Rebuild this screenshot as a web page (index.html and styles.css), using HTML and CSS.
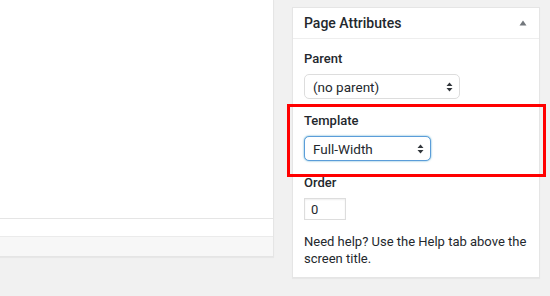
FILE: index.html
```html
<!DOCTYPE html>
<html lang="en">
<head>
  <meta charset="UTF-8" />
  <meta name="viewport" content="width=device-width, initial-scale=1" />
  <title>Page Attributes</title>
  <link rel="stylesheet" href="styles.css">
</head>
<body>

<div class="screen">
  <div class="editor">
    <div class="editor-area"></div>
    <div class="editor-row"></div>
    <div class="editor-status"></div>
  </div>

  <div class="postbox">
    <div class="postbox-head">
      <h2>Page Attributes</h2>
      <svg class="toggle" width="8" height="6" viewBox="0 0 8 6"><path d="M4 0.5 L7.5 5.5 L0.5 5.5 Z" fill="#72777c"/></svg>
    </div>
    <div class="inside">
      <div class="field">
        <label for="parent">Parent</label>
        <div class="select-wrap parent">
          <select id="parent"><option>(no parent)</option></select>
          <svg class="arrows" width="7" height="10" viewBox="0 0 7 10"><path d="M3.5 0.5 L6.5 4 L0.5 4 Z M3.5 9.5 L6.5 6 L0.5 6 Z" fill="#32373c"/></svg>
        </div>
      </div>

      <!-- highlighted -->
      <div class="field marked">
        <label for="template">Template</label>
        <div class="select-wrap template">
          <select id="template" class="focus"><option>Full-Width</option></select>
          <svg class="arrows" width="7" height="10" viewBox="0 0 7 10"><path d="M3.5 0.5 L6.5 4 L0.5 4 Z M3.5 9.5 L6.5 6 L0.5 6 Z" fill="#32373c"/></svg>
        </div>
      </div>

      <div class="field">
        <label for="order">Order</label>
        <input type="text" id="order" value="0">
      </div>

      <p class="help">Need help? Use the Help tab above the screen title.</p>
    </div>
  </div>
</div>

</body>
</html>
```

FILE: styles.css
```css
:root {
  --bg: #f1f1f1; --line: #e5e5e5; --text: #23282d;
  --input: #ddd; --focus: #5b9dd9; --mark: #ff0000;
}
body {
  margin: 0; background: var(--bg); color: var(--text);
  font-family: Roboto, "Noto Sans", sans-serif; font-size: 13px;
}
.screen { display: flex; align-items: flex-start; gap: 18px; height: 296px; overflow: hidden; }

.editor {
  width: 273px; border-right: 1px solid var(--line); border-bottom: 1px solid var(--line);
  background: #fff; box-shadow: 0 1px 1px rgba(0,0,0,.04);
}
.editor-area { height: 218px; }
.editor-row { height: 17px; border-top: 1px solid var(--line); }
.editor-status { height: 19px; border-top: 1px solid #ebebeb; background: #f7f7f7; }

.postbox {
  width: 246px; margin-top: 7px; background: #fff;
  border: 1px solid var(--line); box-shadow: 0 1px 1px rgba(0,0,0,.04);
}
.postbox-head {
  display: flex; justify-content: space-between; align-items: center;
  height: 30px; padding: 0 12px 0 11px; border-bottom: 1px solid #eee;
}
.postbox-head h2 { margin: 0; font-size: 14px; font-weight: 500; }
.toggle { margin-top: -1px; }

.inside { padding: 11px 11px 10px; }
.field label { display: block; font-weight: 500; line-height: 18px; margin-bottom: 6px; }
.field + .field { margin-top: 13px; }
.marked { position: relative; }
.marked::after {
  content: ""; position: absolute; top: -8px; bottom: -16px; left: -17px; right: -18px;
  border: 3px solid var(--mark); pointer-events: none;
}

.select-wrap { position: relative; }
.select-wrap.parent { width: 156px; }
.select-wrap.template { width: 127px; }
select {
  appearance: none; -webkit-appearance: none; width: 100%; height: 25px;
  padding: 0 20px 0 8px; border: 1px solid var(--input); border-radius: 5px;
  background: #fff; color: var(--text); font: inherit; font-size: 13.5px;
}
select.focus { border-color: var(--focus); box-shadow: 0 0 2px rgba(30,140,190,.8); }
.arrows { position: absolute; right: 7px; top: 8px; pointer-events: none; }

input {
  width: 42px; height: 22px; box-sizing: border-box; padding: 0 6px;
  border: 1px solid var(--input); box-shadow: inset 0 1px 2px rgba(0,0,0,.07);
  color: var(--text); font: inherit;
}

.help { margin: 13px 0 0; line-height: 17px; }
```
